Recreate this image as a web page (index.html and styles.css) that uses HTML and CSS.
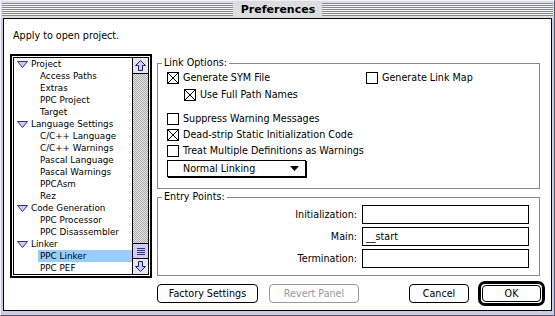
FILE: index.html
```html
<!DOCTYPE html>
<html lang="en">
<head>
  <meta charset="UTF-8" />
  <title>Preferences</title>
  <link rel="stylesheet" href="styles.css">
</head>
<body>
  <div class="window">
    <div class="titlebar">
      <span class="stripes"></span>
      <span class="title">Preferences</span>
      <span class="stripes"></span>
    </div>

    <div class="content">
      <p class="hint">Apply to open project.</p>

      <div class="main">
        <!-- panel list with focus ring -->
        <div class="list-ring">
          <div class="list">
            <ul class="tree">
              <li class="cat"><svg class="twisty" width="11" height="7"><path d="M0.5 0.5H10.5L5.5 6.5Z" /></svg>Project</li>
              <li class="item">Access Paths</li>
              <li class="item">Extras</li>
              <li class="item">PPC Project</li>
              <li class="item">Target</li>
              <li class="cat"><svg class="twisty" width="11" height="7"><path d="M0.5 0.5H10.5L5.5 6.5Z" /></svg>Language Settings</li>
              <li class="item">C/C++ Language</li>
              <li class="item">C/C++ Warnings</li>
              <li class="item">Pascal Language</li>
              <li class="item">Pascal Warnings</li>
              <li class="item">PPCAsm</li>
              <li class="item">Rez</li>
              <li class="cat"><svg class="twisty" width="11" height="7"><path d="M0.5 0.5H10.5L5.5 6.5Z" /></svg>Code Generation</li>
              <li class="item">PPC Processor</li>
              <li class="item">PPC Disassembler</li>
              <li class="cat"><svg class="twisty" width="11" height="7"><path d="M0.5 0.5H10.5L5.5 6.5Z" /></svg>Linker</li>
              <li class="item selected">PPC Linker</li>
              <li class="item">PPC PEF</li>
            </ul>
            <div class="scrollbar">
              <div class="arrow up">
                <svg width="11" height="11"><path d="M5.5 0.5L10.5 5.5H7.5V10.5H3.5V5.5H0.5Z" /></svg>
              </div>
              <div class="track">
                <div class="thumb"><span class="grip"></span></div>
              </div>
              <div class="arrow down">
                <svg width="11" height="11"><path d="M5.5 10.5L10.5 5.5H7.5V0.5H3.5V5.5H0.5Z" /></svg>
              </div>
            </div>
          </div>
        </div>

        <div class="panels">
          <fieldset class="group">
            <legend>Link Options:</legend>
            <div class="options">
              <div class="row first">
                <label class="check"><svg width="12" height="12"><rect x="0.5" y="0.5" width="11" height="11" /><path d="M1 1L11 11M11 1L1 11" /></svg>Generate SYM File</label>
                <label class="check"><svg width="12" height="12"><rect x="0.5" y="0.5" width="11" height="11" /></svg>Generate Link Map</label>
              </div>
              <label class="check sub"><svg width="12" height="12"><rect x="0.5" y="0.5" width="11" height="11" /><path d="M1 1L11 11M11 1L1 11" /></svg>Use Full Path Names</label>
              <label class="check spaced"><svg width="12" height="12"><rect x="0.5" y="0.5" width="11" height="11" /></svg>Suppress Warning Messages</label>
              <label class="check next"><svg width="12" height="12"><rect x="0.5" y="0.5" width="11" height="11" /><path d="M1 1L11 11M11 1L1 11" /></svg>Dead-strip Static Initialization Code</label>
              <label class="check next"><svg width="12" height="12"><rect x="0.5" y="0.5" width="11" height="11" /></svg>Treat Multiple Definitions as Warnings</label>
              <div class="popup">
                <span>Normal Linking</span>
                <svg width="9" height="5"><path d="M0 0H9L4.5 5Z" /></svg>
              </div>
            </div>
          </fieldset>

          <fieldset class="group entry">
            <legend>Entry Points:</legend>
            <div class="fields">
              <span class="field-label">Initialization:</span>
              <span class="field"></span>
              <span class="field-label">Main:</span>
              <span class="field">__start</span>
              <span class="field-label">Termination:</span>
              <span class="field"></span>
            </div>
          </fieldset>
        </div>
      </div>

      <div class="buttons">
        <div class="btn-group">
          <button class="btn factory">Factory Settings</button>
          <button class="btn revert" disabled>Revert Panel</button>
        </div>
        <div class="btn-group">
          <button class="btn cancel">Cancel</button>
          <span class="default-ring"><button class="btn ok">OK</button></span>
        </div>
      </div>
    </div>
  </div>
</body>
</html>
```

FILE: styles.css
```css
* {
  box-sizing: border-box;
}
body {
  margin: 0;
  font-family: "DejaVu Sans", sans-serif;
  font-size: 9.6px;
  color: #000;
  background: #fff;
}
.window {
  width: 555px;
  height: 316px;
  display: flex;
  flex-direction: column;
  background: #ccccdd;
  border: 1px solid;
  border-color: #eeeeff #555577 #555577 #eeeeff;
}
.titlebar {
  height: 17px;
  display: flex;
  align-items: center;
  padding: 0 1px;
  background: #dddddd;
}
.stripes {
  flex: 1;
  height: 13px;
  background: repeating-linear-gradient(to bottom, #888 0 1px, #f4f4f4 1px 2px);
}
.title {
  padding: 0 7px 0 8px;
  font-weight: bold;
  font-size: 11px;
  line-height: 13px;
}
.content {
  flex: 1;
  margin: 0 2px 4px;
  background: #fff;
  border: 1px solid #000;
  padding-top: 11px;
}
.hint {
  margin: 0 0 0 9px;
  line-height: 12px;
}

.main {
  display: flex;
  margin: 12px 0 0 6px;
}

/* list */
.list-ring {
  width: 142px;
  height: 224px;
  border: 2px solid #000;
  padding: 1px;
}
.list {
  height: 100%;
  border: 1px solid #000;
  display: flex;
  overflow: hidden;
}
.tree {
  flex: 1;
  margin: 0;
  padding: 0;
  list-style: none;
  font-size: 8.8px;
}
.tree li {
  height: 12px;
  line-height: 12px;
  white-space: nowrap;
}
.cat {
  display: flex;
  align-items: center;
  gap: 3px;
  padding-left: 3px;
}
.twisty path {
  fill: #ccccff;
  stroke: #333366;
}
.item {
  margin-left: 24px;
  padding-left: 2px;
}
.selected {
  background: #99ccff;
}

.scrollbar {
  width: 16px;
  display: flex;
  flex-direction: column;
  border-left: 1px solid #000;
}
.arrow {
  height: 16px;
  display: flex;
  align-items: center;
  justify-content: center;
  background: #e6e6f2;
}
.arrow.up {
  border-bottom: 1px solid #000;
}
.arrow.down {
  border-top: 1px solid #000;
}
.arrow path {
  fill: #ccccff;
  stroke: #222244;
}
.track {
  flex: 1;
  display: flex;
  flex-direction: column;
  justify-content: flex-end;
  background: repeating-conic-gradient(#aaaaaa 0 25%, #e8e8e8 0 50%) 0 0 / 2px 2px;
}
.thumb {
  height: 15px;
  border-top: 1px solid #000;
  background: #ccccff;
  display: flex;
  align-items: center;
  justify-content: center;
}
.grip {
  width: 8px;
  height: 7px;
  background: repeating-linear-gradient(to bottom, #333366 0 1px, transparent 1px 2px);
}

/* right side */
.panels {
  width: 383px;
  margin-left: 5px;
  padding-top: 3px;
}
.group {
  margin: 0;
  padding: 0;
  border: 1px solid #888;
  min-width: 0;
}
.group legend {
  margin-left: 4px;
  padding: 0 2px;
  line-height: 12px;
}
.options {
  display: flex;
  flex-direction: column;
  align-items: flex-start;
  padding: 3px 0 11px 9px;
}
.row.first {
  display: grid;
  grid-template-columns: 199px auto;
}
.check {
  display: flex;
  align-items: center;
  gap: 4px;
  height: 12px;
  line-height: 12px;
  white-space: nowrap;
}
.check rect {
  fill: #fff;
  stroke: #000;
}
.check path {
  stroke: #000;
  stroke-width: 1;
}
.check.sub {
  margin: 5px 0 0 17px;
}
.check.spaced {
  margin-top: 12px;
}
.check.next {
  margin-top: 4px;
}
.popup {
  margin-top: 3px;
  width: 139px;
  height: 17px;
  border: 1px solid #000;
  box-shadow: 1px 1px 0 #000;
  display: flex;
  align-items: center;
  justify-content: space-between;
  padding: 0 6px 0 15px;
}

.entry {
  margin-top: 2px;
}
.fields {
  display: grid;
  grid-template-columns: 199px 167px;
  grid-auto-rows: 19px;
  gap: 3px 5px;
  padding: 2px 0 7px 0;
}
.field-label {
  text-align: right;
  line-height: 19px;
}
.field {
  border: 1px solid #000;
  padding-left: 3px;
  line-height: 17px;
}

/* buttons */
.buttons {
  display: flex;
  justify-content: space-between;
  align-items: center;
  margin: 3px 6px 0 153px;
  height: 25px;
}
.btn-group {
  display: flex;
  align-items: center;
}
.btn {
  font-family: inherit;
  font-size: 9.6px;
  height: 19px;
  background: #fff;
  color: #000;
  border: 1px solid #000;
  border-radius: 4px;
  padding: 0;
}
.factory {
  width: 101px;
}
.revert {
  width: 90px;
  margin-left: 11px;
  color: #999;
  border-color: #999;
}
.cancel {
  width: 60px;
}
.default-ring {
  margin-left: 9px;
  width: 67px;
  height: 25px;
  border: 3px solid #000;
  border-radius: 7px;
  padding: 1px;
  display: flex;
}
.ok {
  flex: 1;
  height: 17px;
}
```
